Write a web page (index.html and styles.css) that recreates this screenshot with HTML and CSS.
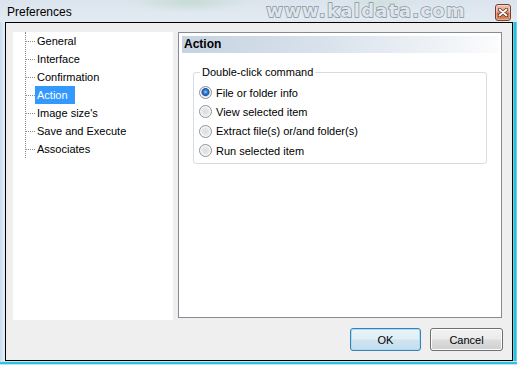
FILE: index.html
```html
<!DOCTYPE html>
<html>
<head>
<meta charset="utf-8">
<link rel="stylesheet" href="styles.css">
</head>
<body>
<div class="window">
  <div class="titlebar">
    <span class="title">Preferences</span>
    <span class="watermark">www.kaldata.com</span>
    <span class="close-btn">
      <svg width="10" height="9" viewBox="0 0 10 9"><path d="M1.5 1.5 L8.5 7.5 M8.5 1.5 L1.5 7.5" stroke="#5a2a1e" stroke-width="3.2" stroke-linecap="round"/><path d="M1.5 1.5 L8.5 7.5 M8.5 1.5 L1.5 7.5" stroke="#ffffff" stroke-width="1.8" stroke-linecap="round"/></svg>
    </span>
  </div>
  <div class="body-row">
    <div class="frame-left"></div>
    <div class="client">
      <div class="content-row">
        <div class="tree">
          <ul class="tree-list">
            <li><span class="label">General</span></li>
            <li><span class="label">Interface</span></li>
            <li><span class="label">Confirmation</span></li>
            <li><span class="label selected">Action</span></li>
            <li><span class="label">Image size's</span></li>
            <li><span class="label">Save and Execute</span></li>
            <li><span class="label">Associates</span></li>
          </ul>
        </div>
        <div class="panel">
          <div class="panel-header">Action</div>
          <fieldset class="group">
            <legend>Double-click command</legend>
            <div class="radio-row"><span class="radio checked"></span><span>File or folder info</span></div>
            <div class="radio-row"><span class="radio"></span><span>View selected item</span></div>
            <div class="radio-row"><span class="radio"></span><span>Extract file(s) or/and folder(s)</span></div>
            <div class="radio-row"><span class="radio"></span><span>Run selected item</span></div>
          </fieldset>
        </div>
      </div>
      <div class="button-row">
        <button class="btn btn-default">OK</button>
        <button class="btn btn-cancel">Cancel</button>
      </div>
    </div>
    <div class="frame-right"></div>
  </div>
  <div class="frame-bottom"></div>
</div>
</body>
</html>
```
FILE: styles.css
```css
* { box-sizing: border-box; }
html, body { margin: 0; padding: 0; }
body {
  width: 517px;
  height: 365px;
  overflow: hidden;
  font-family: "Liberation Sans", Arial, sans-serif;
  font-size: 11px;
  color: #000;
}
.window {
  width: 517px;
  height: 365px;
  display: flex;
  flex-direction: column;
  background: linear-gradient(to bottom, #dfe7ef 0%, #d6e1ec 60%, #cfdceb 100%);
}
.titlebar {
  height: 22px;
  display: flex;
  align-items: center;
  padding: 0 6px 0 7px;
  background:
    radial-gradient(ellipse 60px 10px at 190px 2px, rgba(190,215,200,0.7), transparent),
    radial-gradient(ellipse 40px 8px at 380px 3px, rgba(200,220,210,0.6), transparent),
    linear-gradient(to bottom, #dbe4ed, #e3ebf2);
}
.title {
  flex: 1;
  font-size: 12px;
  padding-top: 2px;
}
.watermark {
  font-family: "DejaVu Sans", sans-serif;
  font-weight: bold;
  font-size: 18px;
  letter-spacing: 1.3px;
  color: #dfe5eb;
  -webkit-text-stroke: 1.4px #8592a0;
  paint-order: stroke fill;
  margin-right: 29px;
  margin-top: -2px;
}
.close-btn {
  width: 16px;
  height: 17px;
  margin-top: 2px;
  border: 1px solid #6f4236;
  border-radius: 3px;
  background: linear-gradient(to bottom, #efc2b2 0%, #e59e84 45%, #d1633e 55%, #e08a5c 100%);
  display: flex;
  align-items: center;
  justify-content: center;
  box-shadow: inset 0 0 0 1px rgba(255,255,255,0.35);
}
.body-row {
  height: 339px;
  display: flex;
}
.frame-left {
  width: 5px;
  background: linear-gradient(to right, #c7dcf0, #d9e8f6 60%, #e8f0f8);
}
.client {
  width: 508px;
  border: 1px solid #000;
  background: #efefef;
  display: flex;
  flex-direction: column;
}
.frame-right {
  width: 4px;
  background: linear-gradient(to right, #b6dde8 0%, #2cc2de 25%, #29bfdc 70%, #9fd8e6 100%);
}
.frame-bottom {
  height: 4px;
  background: linear-gradient(to bottom, #cfe3ee 0%, #cfe3ee 25%, #2dc3df 25%, #2dc3df 75%, #bde5ef 75%);
}
.content-row {
  display: flex;
  padding: 9px 0 0 7px;
  gap: 5px;
}
.tree {
  width: 160px;
  height: 288px;
  background: #fff;
}
.tree-list {
  list-style: none;
  margin: 9px 0 0 12px;
  padding: 0;
  border-left: 1px dotted #8a8a8a;
}
.tree-list li {
  height: 18px;
  display: flex;
  align-items: center;
}
.tree-list li:first-child { margin-top: -9px; }
.tree-list li:last-child { margin-bottom: -9px; }
.tree-list li::before {
  content: "";
  width: 9px;
  height: 0;
  border-top: 1px dotted #8a8a8a;
}
.label {
  line-height: 18px;
  padding: 0 7px 0 2px;
}
.label.selected {
  background: #3399ff;
  color: #fff;
}
.panel {
  width: 324px;
  height: 286px;
  border: 1px solid #858c93;
  background: #fff;
  padding: 3px;
}
.panel-header {
  height: 17px;
  line-height: 17px;
  font-size: 12px;
  font-weight: bold;
  padding-left: 2px;
  background: linear-gradient(to right, #c6d3e2 0%, #d9e2ec 45%, #eef2f6 80%, #fbfcfd 100%);
}
.group {
  margin: 12px 0 0 11px;
  width: 294px;
  border: 1px solid #d3dde5;
  border-radius: 3px;
  padding: 4px 6px 3px 5px;
}
.group legend {
  padding: 0 2px;
  margin-left: 1px;
  line-height: 14px;
  font-size: 11px;
}
.radio-row {
  height: 19.3px;
  display: flex;
  align-items: center;
  gap: 4px;
}
.radio {
  width: 13px;
  height: 13px;
  border-radius: 50%;
  border: 1px solid #8d9196;
  background: radial-gradient(circle at 50% 50%, #dcdcdc 0, #e6e6e6 3px, #f6f6f6 6px);
  box-shadow: inset 0 0 0 1px #f8f8f8;
  flex: none;
}
.radio.checked {
  background: radial-gradient(circle at 50% 45%, #9ad7ff 0, #3a8ae0 1.6px, #1c4f9e 3.6px, #cfd8e3 4.4px, #ececec 5.5px, #f6f6f6 6px);
}
.button-row {
  display: flex;
  justify-content: flex-end;
  gap: 9px;
  padding: 8px 9px 0 0;
}
.btn {
  height: 23px;
  font-family: "Liberation Sans", Arial, sans-serif;
  font-size: 11px;
  color: #000;
  border-radius: 3px;
  padding: 0;
}
.btn-default {
  width: 71px;
  border: 1px solid #3c7fb1;
  background: linear-gradient(to bottom, #eaf4fa 0%, #e0eef7 48%, #cfe4f1 52%, #c4dded 100%);
  box-shadow: inset 0 0 0 1px #a5e0f7;
}
.btn-cancel {
  width: 73px;
  border: 1px solid #707070;
  background: linear-gradient(to bottom, #f2f2f2 0%, #ebebeb 48%, #dddddd 52%, #cfcfcf 100%);
  box-shadow: inset 0 0 0 1px #fcfcfc;
}
```
